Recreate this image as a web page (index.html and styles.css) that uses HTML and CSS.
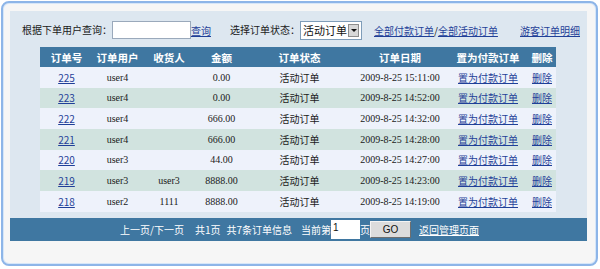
FILE: index.html
```html
<!DOCTYPE html>
<html lang="zh-CN">
  <head>
    <title>订单管理</title>
    <meta charset="utf-8" />
    <link rel="stylesheet" href="styles.css">
  </head>
  <body>
    <div class="frame">
      <div class="panel">
        <form class="toolbar">
          <label for="user" class="label">根据下单用户查询：</label>
          <input id="user" type="text" class="search" />
          <a href="#" class="link">查询</a>
          <span class="label status-label">选择订单状态：</span>
          <span class="select">
            <span class="select-text">活动订单</span>
            <span class="select-btn"><span class="arrow"></span></span>
          </span>
          <span class="filters"><a href="#" class="link">全部付款订单</a>/<a href="#" class="link">全部活动订单</a></span>
          <a href="#" class="link guest">游客订单明细</a>
        </form>
        <table class="orders">
          <colgroup>
            <col style="width: 53px" />
            <col style="width: 49px" />
            <col style="width: 54px" />
            <col style="width: 51px" />
            <col style="width: 105px" />
            <col style="width: 96px" />
            <col style="width: 80px" />
            <col style="width: 28px" />
          </colgroup>
          <thead>
            <tr>
              <th>订单号</th>
              <th>订单用户</th>
              <th>收货人</th>
              <th>金额</th>
              <th>订单状态</th>
              <th>订单日期</th>
              <th>置为付款订单</th>
              <th>删除</th>
            </tr>
          </thead>
          <tbody>
            <tr>
              <td><a href="#" class="link">225</a></td>
              <td>user4</td>
              <td></td>
              <td>0.00</td>
              <td class="cn">活动订单</td>
              <td>2009-8-25 15:11:00</td>
              <td><a href="#" class="link">置为付款订单</a></td>
              <td><a href="#" class="link">删除</a></td>
            </tr>
            <tr>
              <td><a href="#" class="link">223</a></td>
              <td>user4</td>
              <td></td>
              <td>0.00</td>
              <td class="cn">活动订单</td>
              <td>2009-8-25 14:52:00</td>
              <td><a href="#" class="link">置为付款订单</a></td>
              <td><a href="#" class="link">删除</a></td>
            </tr>
            <tr>
              <td><a href="#" class="link">222</a></td>
              <td>user4</td>
              <td></td>
              <td>666.00</td>
              <td class="cn">活动订单</td>
              <td>2009-8-25 14:32:00</td>
              <td><a href="#" class="link">置为付款订单</a></td>
              <td><a href="#" class="link">删除</a></td>
            </tr>
            <tr>
              <td><a href="#" class="link">221</a></td>
              <td>user4</td>
              <td></td>
              <td>666.00</td>
              <td class="cn">活动订单</td>
              <td>2009-8-25 14:28:00</td>
              <td><a href="#" class="link">置为付款订单</a></td>
              <td><a href="#" class="link">删除</a></td>
            </tr>
            <tr>
              <td><a href="#" class="link">220</a></td>
              <td>user3</td>
              <td></td>
              <td>44.00</td>
              <td class="cn">活动订单</td>
              <td>2009-8-25 14:27:00</td>
              <td><a href="#" class="link">置为付款订单</a></td>
              <td><a href="#" class="link">删除</a></td>
            </tr>
            <tr>
              <td><a href="#" class="link">219</a></td>
              <td>user3</td>
              <td>user3</td>
              <td>8888.00</td>
              <td class="cn">活动订单</td>
              <td>2009-8-25 14:23:00</td>
              <td><a href="#" class="link">置为付款订单</a></td>
              <td><a href="#" class="link">删除</a></td>
            </tr>
            <tr>
              <td><a href="#" class="link">218</a></td>
              <td>user2</td>
              <td>1111</td>
              <td>8888.00</td>
              <td class="cn">活动订单</td>
              <td>2009-8-25 14:19:00</td>
              <td><a href="#" class="link">置为付款订单</a></td>
              <td><a href="#" class="link">删除</a></td>
            </tr>
          </tbody>
        </table>
        <div class="pager">
          <span class="pages">上一页/下一页</span>
          <span class="total">共1页</span>
          <span class="count">共7条订单信息</span>
          <span>当前第</span>
          <input type="text" class="page-no" value="1" />
          <span>页</span>
          <button type="button" class="go">GO</button>
          <a href="#" class="back">返回管理页面</a>
        </div>
      </div>
    </div>
  </body>
</html>
```

FILE: styles.css
```css
html {
  box-sizing: border-box;
}
*,
*::before,
*::after {
  box-sizing: inherit;
}
body {
  margin: 0;
  background: #ffffff;
  font-family: "Liberation Serif", "Noto Sans CJK SC", serif;
  font-size: 10px;
  color: #1a1a1a;
}
.frame {
  margin: 1px 2px 0 1px;
  height: 265px;
  border: 2px solid #8db5e8;
  border-radius: 8px;
  box-shadow: inset 0 0 0 1px #d6e6f8;
  background: #f6f6f6;
  padding: 8px 9px 0 7px;
}
.panel {
  background: #dde7f0;
}
.toolbar {
  display: flex;
  align-items: center;
  height: 20px;
  margin: 0;
  padding: 0 7px 0 12px;
  position: relative;
  top: 9px;
}
.label {
  font-family: "Noto Sans CJK SC", sans-serif;
  font-size: 10px;
  line-height: 20px;
  color: #1a1a1a;
}
.search {
  width: 79px;
  height: 18px;
  margin: 0;
  padding: 0;
  border: 1px solid #9aa9bb;
  background: #ffffff;
}
.link {
  font-family: "Noto Sans CJK SC", sans-serif;
  color: #1f3f98;
  text-decoration: underline;
}
.status-label {
  margin-left: 19px;
}
.select {
  display: flex;
  align-items: center;
  width: 62px;
  height: 19px;
  border: 1px solid #7f9db9;
  background: #ffffff;
  font-family: "Noto Sans CJK SC", sans-serif;
  font-size: 11px;
}
.select-text {
  flex: 1;
  padding-left: 2px;
  color: #111111;
}
.select-btn {
  width: 11px;
  height: 13px;
  margin-right: 2px;
  background: #d8d8d8;
  border: 1px solid #8d8d8d;
  display: flex;
  align-items: center;
  justify-content: center;
}
.arrow {
  width: 0;
  height: 0;
  border-left: 3px solid transparent;
  border-right: 3px solid transparent;
  border-top: 3px solid #111111;
}
.filters {
  margin-left: 12px;
  font-family: "Noto Sans CJK SC", sans-serif;
}
.guest {
  margin-left: auto;
}
.orders {
  margin: 16px 0 0 30px;
  width: 516px;
  table-layout: fixed;
  border-collapse: collapse;
}
.orders th {
  height: 20px;
  padding: 0;
  background: #3f77a1;
  color: #ffffff;
  font-family: "Noto Sans CJK SC", sans-serif;
  font-size: 10.5px;
  font-weight: bold;
  text-align: center;
  white-space: nowrap;
}
.orders tbody tr {
  height: 20.67px;
}
.orders td {
  padding: 0;
  text-align: center;
  white-space: nowrap;
}
.orders tbody tr:nth-child(odd) {
  background: #eef2fb;
}
.orders tbody tr:nth-child(even) {
  background: #d1e3df;
}
.cn {
  font-family: "Noto Sans CJK SC", sans-serif;
}
.pager {
  display: flex;
  align-items: center;
  justify-content: center;
  height: 23px;
  margin-top: 6px;
  padding-left: 2px;
  background: #3f77a1;
  color: #ffffff;
  font-family: "Noto Sans CJK SC", sans-serif;
  font-size: 10px;
}
.pages {
  margin-right: 11px;
}
.total {
  margin-right: 6px;
}
.count {
  margin-right: 9px;
}
.page-no {
  width: 29px;
  height: 19px;
  margin: 0;
  padding: 0 0 4px 2px;
  border: none;
  font-family: "Liberation Sans", sans-serif;
  font-size: 10px;
  color: #111111;
}
.go {
  width: 41px;
  height: 17px;
  margin: 0 8px 0 0;
  padding: 0;
  background: #dcdcdc;
  border: 1px solid;
  border-color: #f4f4f4 #6e6e6e #6e6e6e #f4f4f4;
  font-family: "Liberation Sans", sans-serif;
  font-size: 10px;
  color: #111111;
}
.back {
  color: #ffffff;
  text-decoration: underline;
}
```
